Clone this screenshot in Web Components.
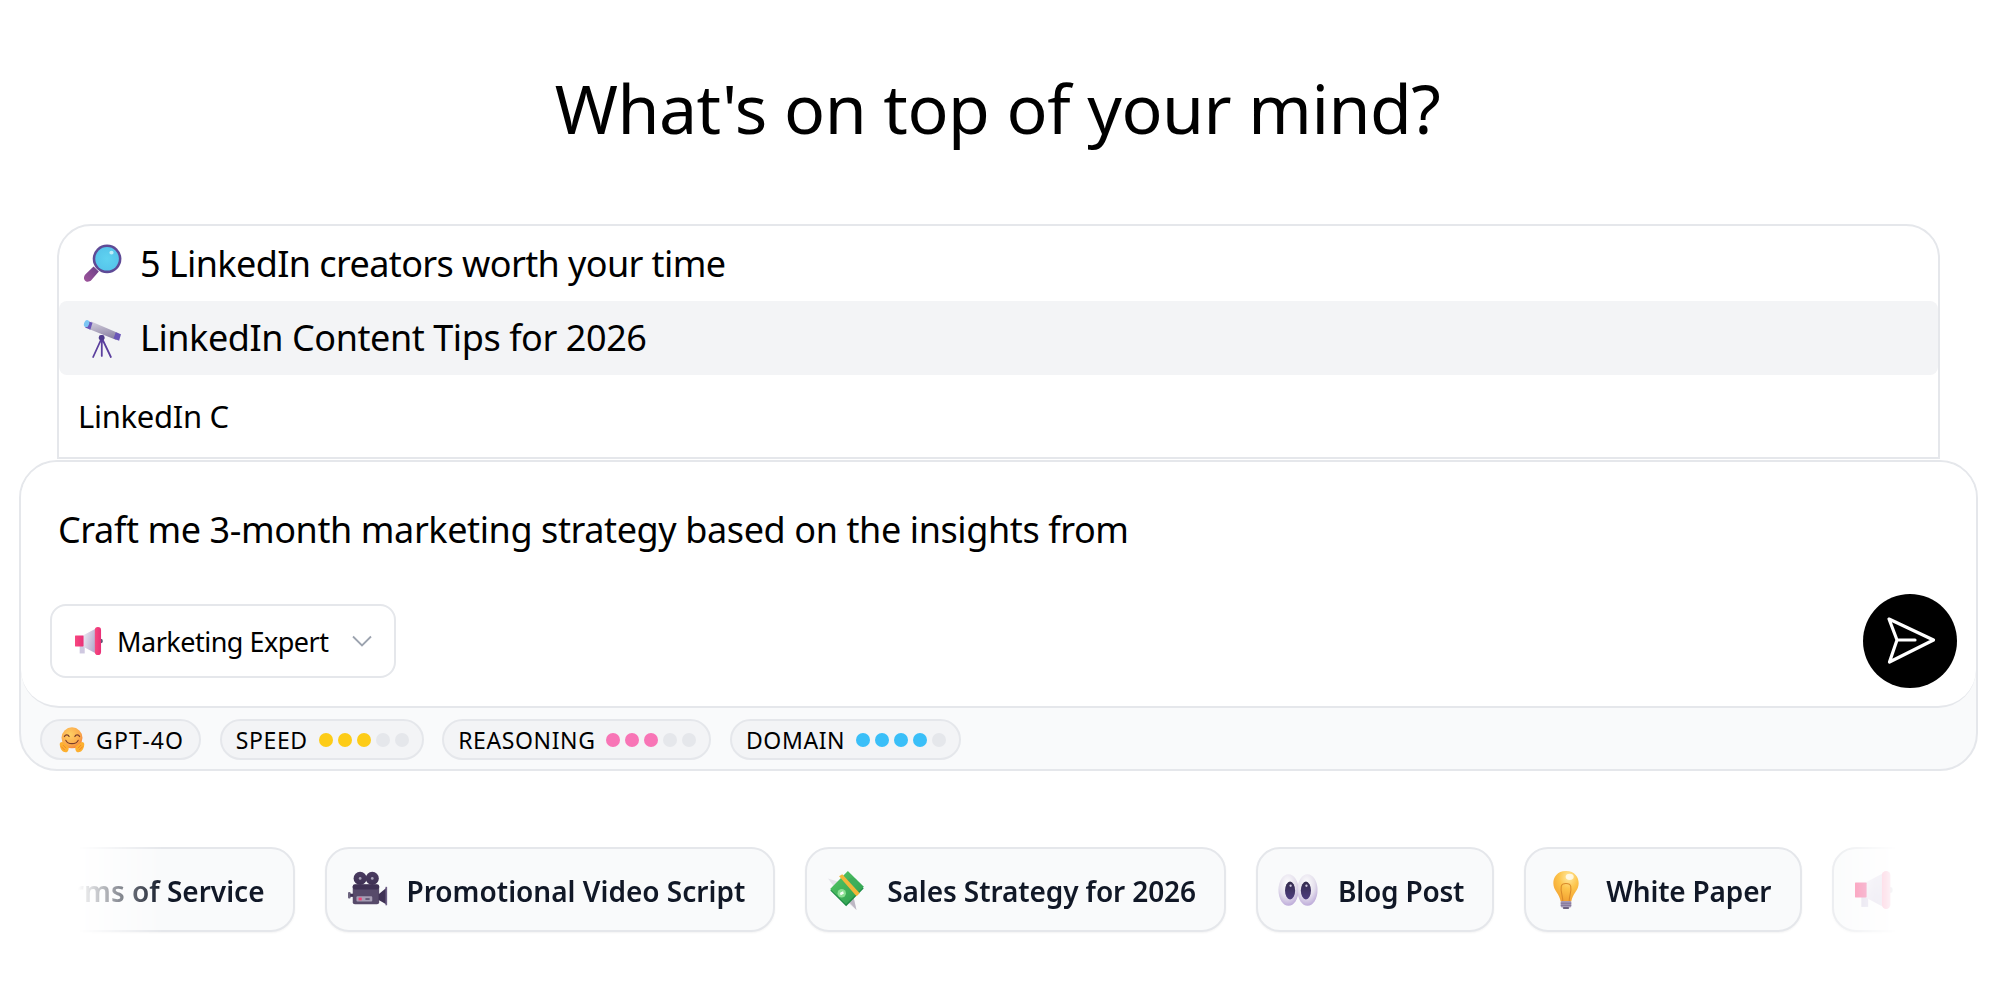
<!DOCTYPE html>
<html lang="en"><head><meta charset="utf-8"><title>What's on top of your mind?</title>
<style>
html,body{margin:0;padding:0;background:#fff;}
body{font-family:"Noto Sans","Open Sans",sans-serif;color:#000;width:2000px;height:992px;overflow:hidden;}
</style></head>
<body>
<x-page>
  <x-title>What's on top of your mind?</x-title>
  <x-suggestions>
    <x-suggestion icon="magnifier">5 LinkedIn creators worth your time</x-suggestion>
    <x-suggestion icon="telescope" active>LinkedIn Content Tips for 2026</x-suggestion>
    <x-query>LinkedIn C</x-query>
  </x-suggestions>
  <x-prompt>
    <x-prompt-text>Craft me 3-month marketing strategy based on the insights from</x-prompt-text>
    <x-persona slot="tools" icon="megaphone">Marketing Expert</x-persona>
    <x-send slot="tools"></x-send>
    <x-stat slot="stats" icon="hug">GPT-4O</x-stat>
    <x-stat slot="stats" level="3" color="#fdcc17">SPEED</x-stat>
    <x-stat slot="stats" level="3" color="#f875b6">REASONING</x-stat>
    <x-stat slot="stats" level="4" color="#3abff8">DOMAIN</x-stat>
  </x-prompt>
  <x-strip>
    <x-template>Terms of Service</x-template>
    <x-template icon="camera">Promotional Video Script</x-template>
    <x-template icon="money" style="letter-spacing:-.1px">Sales Strategy for 2026</x-template>
    <x-template icon="eyes" style="letter-spacing:-.2px">Blog Post</x-template>
    <x-template icon="bulb" style="letter-spacing:-.2px;padding-right:29px">White Paper</x-template>
    <x-template icon="megaphone"></x-template>
  </x-strip>
</x-page>
<script>
const EMOJI={
magnifier:`<defs><linearGradient id="h" x1="0" y1="1" x2="1" y2="0"><stop offset="0" stop-color="#a0559c"/><stop offset="1" stop-color="#6b3f87"/></linearGradient><radialGradient id="l" cx=".5" cy=".5" r=".55"><stop offset="0" stop-color="#5fd2f0"/><stop offset="1" stop-color="#55c4ea"/></radialGradient></defs>
<path d="M2.600 28.400 10 21.400 15 26 7.800 34.400C6 36.200 3.200 36.200 1.800 34.600 .2 32.800 .8 30 2.600 28.400Z" fill="url(#h)"/>
<circle cx="22.800" cy="14" r="13.600" fill="#5e4a96"/><circle cx="22.800" cy="14" r="11.200" fill="url(#l)"/><ellipse cx="27" cy="8.200" rx="2" ry="1.700" fill="#bdeefa"/>`,
telescope:`<defs><linearGradient id="t" x1="0" y1="0" x2=".3" y2="1"><stop offset="0" stop-color="#d6d2de"/><stop offset="1" stop-color="#8d84a6"/></linearGradient></defs>
<path d="M17.800 18 9.600 36M17.800 18V35M17.800 18 26.400 36" stroke="#5b3f9e" stroke-width="1.700" fill="none" stroke-linecap="round"/>
<path d="M7.800 2.400 33.800 13.400 31.600 20 5.600 9.400Z" fill="url(#t)"/>
<path d="M3.600 1.600 9 3.600 7 10.200 2 8Z" fill="#6a55b8"/><path d="M31 12.500 36 14.500 34.200 20.500 29 18.400Z" fill="#6a55b8"/>
<ellipse cx="3.400" cy="4.300" rx="2.400" ry="3.400" transform="rotate(20 3.400 4.300)" fill="#7cc6f4"/>
<rect x="15" y="15.200" width="5.400" height="5" rx="2" fill="#4d3a8c"/>`,
megaphone:`<defs><linearGradient id="b" x1="0" y1="0" x2="1" y2=".4"><stop offset="0" stop-color="#f3eff6"/><stop offset="1" stop-color="#b8aed0"/></linearGradient><linearGradient id="p" x1="0" y1="0" x2="1" y2="0"><stop offset="0" stop-color="#f7487f"/><stop offset="1" stop-color="#e92f78"/></linearGradient></defs>
<rect x="6" y="23" width="6.500" height="11" fill="#cfc8e0"/>
<path d="M10 11 27 2V34L10 25Z" fill="url(#b)"/>
<rect x="0" y="11" width="11" height="14" rx=".5" fill="url(#p)"/>
<circle cx="33" cy="18" r="2.800" fill="#5c5470"/>
<rect x="25.500" y="0" width="8" height="36" rx="4" fill="url(#p)"/>`,
hug:`<defs><radialGradient id="f" cx=".4" cy=".35" r=".7"><stop offset="0" stop-color="#ffd164"/><stop offset=".7" stop-color="#fba94b"/><stop offset="1" stop-color="#f27f3a"/></radialGradient></defs>
<circle cx="18" cy="15" r="14.500" fill="url(#f)"/>
<path d="M7.500 13.200C8.800 10 12.800 10 14 13.200M22 13.200C23.200 10 27.200 10 28.500 13.200" fill="none" stroke="#7a3d2a" stroke-width="1.700" stroke-linecap="round"/>
<path d="M9.500 18.500C12 24.500 24 24.500 26.500 18.500" fill="none" stroke="#7a3d2a" stroke-width="1.700" stroke-linecap="round"/>
<path d="M1 24C1 20.800 5 20 6.500 22L12.500 26.500C14 28 13.800 33 10.500 34.800 7 36 1.500 33 1 24Z" fill="#fdb02f"/>
<path d="M35 24C35 20.800 31 20 29.500 22L23.500 26.500C22 28 22.200 33 25.500 34.800 29 36 34.500 33 35 24Z" fill="#fdb02f"/>
<path d="M6 25.500 9.500 29M3.500 27.500 7.500 31.500M30 25.500 26.500 29M32.500 27.500 28.500 31.500" stroke="#ec7d2c" stroke-width="1.200" stroke-linecap="round"/>`,
camera:`<defs><linearGradient id="c" x1="0" y1="0" x2="0" y2="1"><stop offset="0" stop-color="#4a3b60"/><stop offset="1" stop-color="#3f3154"/></linearGradient></defs>
<circle cx="11.500" cy="7" r="6.200" fill="url(#c)"/><circle cx="23" cy="7" r="6.200" fill="url(#c)"/>
<circle cx="11.500" cy="7" r="1.300" fill="#a9a3b8"/><circle cx="23" cy="7" r="1.300" fill="#a9a3b8"/>
<rect x="4.500" y="13" width="25" height="18.500" rx="2" fill="#574a6a"/><rect x="4.500" y="12.500" width="25" height="5" rx="2" fill="#3f3154"/>
<path d="M29 22 37 15.500V32L29 27.500Z" fill="#3f3154"/><rect x="35.500" y="15" width="1.500" height="17.500" fill="#6e5f86"/>
<rect x="0" y="20" width="2.500" height="6" rx="1" fill="#6e6580"/><rect x="2" y="21.500" width="3" height="3" fill="#3f3154"/>
<rect x="8" y="24" width="15" height="5" rx="1" fill="#a69db4"/><rect x="10" y="25.200" width="3" height="2.600" fill="#ef3f73"/><rect x="16.500" y="25.800" width="4" height="1.500" fill="#5a4f6c"/>`,
money:`<defs><linearGradient id="g" x1="0" y1="0" x2="1" y2="1"><stop offset="0" stop-color="#57c865"/><stop offset="1" stop-color="#2a9c4f"/></linearGradient></defs>
<path d="M0 7 12 11 24 24 27 37 14 26Z" fill="#e6e3ea"/><path d="M27 37 24 24 17.500 27Z" fill="#bdb8c4"/>
<path d="M18.800 1.600 33.800 16.500 17.200 33.300 2.200 18.400Z" fill="#1d8a45"/>
<path d="M18.800 0 34 15 17 31.600 2 17Z" fill="url(#g)"/>
<circle cx="23" cy="11" r="4.500" fill="#3fae5b"/><circle cx="13" cy="21" r="4" fill="#8adf93"/>
<path d="M11.400 21.400 14.500 19.600M11.800 22.600 14.800 20.800" stroke="#fff" stroke-width="1.100"/>
<path d="M10.500 5 13.500 3 30 21 27 24Z" fill="#f3b63a"/>`,
eyes:`<defs><radialGradient id="w" cx=".45" cy=".3" r=".85"><stop offset="0" stop-color="#fff"/><stop offset=".5" stop-color="#e4dfec"/><stop offset="1" stop-color="#a98fd0"/></radialGradient><linearGradient id="u" x1="0" y1="0" x2="0" y2="1"><stop offset="0" stop-color="#332b4c"/><stop offset="1" stop-color="#4e3d80"/></linearGradient></defs>
<ellipse cx="9" cy="18" rx="9.500" ry="15" fill="url(#w)"/><ellipse cx="27" cy="18" rx="9.500" ry="15" fill="url(#w)"/>
<ellipse cx="10.500" cy="18.500" rx="4.800" ry="8.500" fill="url(#u)"/><ellipse cx="25.500" cy="18.500" rx="4.800" ry="8.500" fill="url(#u)"/>
<circle cx="11" cy="14" r="1.100" fill="#cfc8e0"/><circle cx="26" cy="14" r="1.100" fill="#cfc8e0"/>`,
bulb:`<defs><radialGradient id="y" cx=".6" cy=".2" r=".85"><stop offset="0" stop-color="#ffe9a0"/><stop offset=".45" stop-color="#fdc44b"/><stop offset="1" stop-color="#f29e2e"/></radialGradient></defs>
<path d="M18 0C9.600 0 6 6 6 11.500 6 18.500 12 21.500 13 29H23C24 21.500 30 18.500 30 11.500 30 6 26.400 0 18 0Z" fill="url(#y)"/>
<path d="M15 29C15 23 12.500 19 13.500 14.500 14.500 11 21.500 11 22.500 14.500 23.500 19 21 23 21 29" fill="none" stroke="#d98a2a" stroke-width="1"/>
<ellipse cx="21.500" cy="5.500" rx="3.800" ry="3" fill="#fff" fill-opacity=".75"/>
<rect x="13" y="28.500" width="10" height="6" rx="1" fill="#a79bb8"/><path d="M13 30.500H23M13 32.500H23" stroke="#7c6f94" stroke-width=".9"/><rect x="15" y="34" width="6" height="2" rx="1" fill="#6e6280"/>`
};
customElements.define('x-emoji',class extends HTMLElement{
  static get observedAttributes(){return['name'];}
  constructor(){super();this.attachShadow({mode:'open'});}
  attributeChangedCallback(){this.render();}
  connectedCallback(){this.render();}
  render(){
    const n=this.getAttribute('name');
    this.shadowRoot.innerHTML=`<style>:host{display:inline-flex;flex:none;align-items:center;justify-content:center;width:38px;height:38px}svg{width:100%;height:100%;display:block;overflow:visible}</style>`+(EMOJI[n]?`<svg viewBox="0 0 36 36" aria-hidden="true">${EMOJI[n]}</svg>`:'');
  }
});
function def(name,css,html,extra){
  const tpl=document.createElement('template');
  tpl.innerHTML=`<style>${css}</style>${html}`;
  customElements.define(name,class extends HTMLElement{
    constructor(){super();this.attachShadow({mode:'open'}).appendChild(document.importNode(tpl.content,true));}
    connectedCallback(){if(extra)extra.call(this,this.shadowRoot);}
  });
}
function iconFromAttr(r){const e=r.querySelector('x-emoji'),ic=this.getAttribute('icon');if(ic)e.setAttribute('name',ic);else e.remove();}
def('x-page',':host{display:flex;flex-direction:column;padding:0 22px 0 19px}','<slot></slot>');
def('x-title',':host{display:block;text-align:center;font-size:68px;line-height:92px;padding:62px 2px 0 0;height:224px;box-sizing:border-box;letter-spacing:-.5px;white-space:nowrap}','<slot></slot>');
def('x-suggestions',':host{display:block;margin:0 38px;height:235px;box-sizing:border-box;border:2px solid #e5e7eb;border-radius:34px 34px 0 0;overflow:hidden}','<slot></slot>');
def('x-suggestion',':host{display:flex;align-items:center;gap:19px;height:74.500px;padding-left:24px;font-size:36px;letter-spacing:-.6px;white-space:nowrap;border-radius:8px}:host([active]){background:#f3f4f6;letter-spacing:-.43px}','<x-emoji></x-emoji><span><slot></slot></span>',iconFromAttr);
def('x-query',':host{display:flex;align-items:center;height:82px;padding-left:19px;font-size:31px;letter-spacing:-.3px;white-space:nowrap}','<slot></slot>');
def('x-prompt',`:host{display:block;margin-top:1px;border:2px solid #e5e7eb;border-radius:38px;background:#f9fafb;box-sizing:border-box;height:311px;overflow:hidden}
.main{background:#fff;border-bottom:2px solid #e5e7eb;border-radius:0 0 38px 38px;height:246px;box-sizing:border-box;display:flex;flex-direction:column;padding:0 19px 0 29px}
.tools{display:flex;align-items:center;justify-content:space-between;margin-top:auto;padding-bottom:18px}
.stats{display:flex;gap:18.500px;padding:11px 0 0 19px}`,
`<div class="main"><slot></slot><div class="tools"><slot name="tools"></slot></div></div><div class="stats"><slot name="stats"></slot></div>`);
def('x-prompt-text',':host{display:block;padding-top:44px;margin-left:8px;font-size:36px;line-height:48px;letter-spacing:-.4px;white-space:nowrap}','<slot></slot>');
def('x-persona',`:host{display:inline-flex;align-items:center;box-sizing:border-box;height:74px;width:346px;border:2px solid #e5e7eb;border-radius:16px;padding-left:23px;font-size:27px;letter-spacing:-.5px;white-space:nowrap}
x-emoji{width:28px;height:28px;margin-right:14px}
svg{margin-left:auto;margin-right:22px;width:20px;height:12px}`,
`<x-emoji></x-emoji><span><slot></slot></span><svg viewBox="0 0 20 12" fill="none" stroke="#9ca3af" stroke-width="1.800"><path d="M1 1.500 10 10.500 19 1.500"/></svg>`,iconFromAttr);
def('x-send',':host{display:flex;width:94px;height:94px;border-radius:50%;background:#000;flex:none}svg{display:block}','<svg width="94" height="94" viewBox="0 0 94 94" fill="none" stroke="#fff" stroke-width="3.200" stroke-linejoin="round" stroke-linecap="round"><path d="M26 25 70.500 46 26.500 68 34 46ZM34 46H52"/></svg>');
def('x-stat',`:host{display:inline-flex;align-items:center;box-sizing:border-box;height:41px;border:2px solid #e5e7eb;border-radius:21px;background:#f3f4f6;padding:0 13px 0 14px;font-size:23px;white-space:nowrap;letter-spacing:.6px}
:host([icon]){letter-spacing:1.2px;padding-right:15px}
x-emoji{width:26px;height:26px;margin:0 11px 0 3px}
.dots{display:inline-flex;gap:5px;margin-left:11px}.dots:empty{display:none}
i{display:block;width:14px;height:14px;border-radius:50%;background:#e5e7eb}`,
`<x-emoji></x-emoji><span><slot></slot></span><span class="dots"></span>`,function(r){
  iconFromAttr.call(this,r);
  const lv=this.getAttribute('level');
  if(lv){const d=r.querySelector('.dots');for(let i=0;i<5;i++){const b=document.createElement('i');if(i<+lv)b.style.background=this.getAttribute('color');d.appendChild(b);}}
});
def('x-strip',`:host{display:block;margin:74px 81px 0 39px;overflow:hidden;padding:2px 0 6px;
-webkit-mask-image:linear-gradient(90deg,transparent 20px,#000 105px,#000 calc(100% - 90px),transparent 100%);mask-image:linear-gradient(90deg,transparent 20px,#000 105px,#000 calc(100% - 90px),transparent 100%)}
.track{display:flex;gap:30px;margin-left:-39.500px;width:max-content}`,'<div class="track"><slot></slot></div>');
def('x-template',`:host{display:inline-flex;align-items:center;flex:none;box-sizing:border-box;height:85px;border:2px solid #e5e7eb;border-radius:24px;background:#f9fafb;padding:0 28px 0 21px;font-size:28px;font-weight:600;color:#111827;white-space:nowrap;box-shadow:0 1px 2px rgba(0,0,0,.05)}
x-emoji{margin-right:21px}span{padding-top:2px}`,'<x-emoji></x-emoji><span><slot></slot></span>',iconFromAttr);
</script>
</body></html>
